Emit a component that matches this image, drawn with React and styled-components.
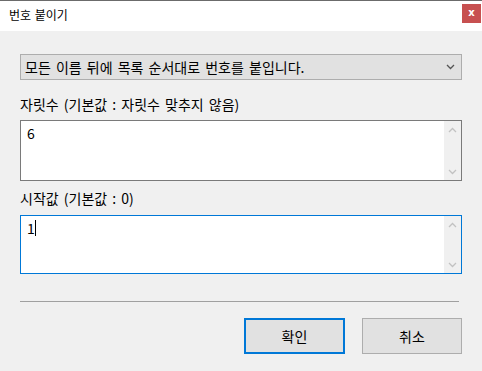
import React from "react";
import styled, { createGlobalStyle } from "styled-components";

const Global = createGlobalStyle`
  html, body { margin: 0; padding: 0; background: #f0f0f0; }
  body { font-family: "Noto Sans CJK KR", "Noto Sans", sans-serif; color: #000; }
  * { box-sizing: border-box; }
`;

const Window = styled.div`
  width: 482px;
  height: 371px;
  display: flex;
  flex-direction: column;
  background: #f0f0f0;
  overflow: hidden;
`;

const TitleBar = styled.div`
  height: 31px;
  background: #fff;
  border-top: 1px solid #6b6b6b;
  display: flex;
  align-items: center;
  justify-content: space-between;
  padding-left: 9px;
  padding-right: 1px;
`;

const Title = styled.span`
  font-size: 12px;
  line-height: 1;
  margin-top: -2px;
  word-spacing: 1px;
`;

const CloseBtn = styled.div`
  width: 19px;
  height: 19px;
  margin-top: -6px;
  background: #c75050;
  color: #fff;
  font-family: "DejaVu Sans", sans-serif;
  font-weight: bold;
  font-size: 10px;
  display: flex;
  align-items: center;
  justify-content: center;
  line-height: 1;
`;

const Body = styled.div`
  padding: 23px 20px 0 20px;
  display: flex;
  flex-direction: column;
  word-spacing: 2px;
`;

const Combo = styled.div`
  height: 26px;
  background: #e1e1e1;
  border: 1px solid #adadad;
  display: flex;
  align-items: center;
  justify-content: space-between;
  padding: 0 6px 0 4px;
  font-size: 14px;
`;

const Label = styled.div`
  font-size: 14px;
  line-height: 18px;
  margin-top: ${(p) => p.$top}px;
  height: 18px;
`;

const Field = styled.div`
  margin-top: ${(p) => p.$top}px;
  height: ${(p) => p.$h}px;
  background: #fff;
  border: 1px solid ${(p) => (p.$focus ? "#0078d7" : "#7a7a7a")};
  display: flex;
`;

const FieldText = styled.div`
  flex: 1;
  padding: 3px 0 0 6px;
  font-size: 14px;
  line-height: 18px;
  display: flex;
  align-items: flex-start;
`;

const Caret = styled.span`
  display: inline-block;
  width: 1px;
  height: 16px;
  margin-top: 1px;
  background: #000;
`;

const ScrollBar = styled.div`
  width: 17px;
  background: #f0f0f0;
  display: flex;
  flex-direction: column;
  justify-content: space-between;
  align-items: center;
  padding: 6px 0 5px;
`;

const Separator = styled.div`
  margin-top: 27px;
  height: 1px;
  background: #a0a0a0;
  margin-right: 3px;
`;

const Buttons = styled.div`
  margin-top: 16px;
  display: flex;
  justify-content: flex-end;
  gap: 17px;
`;

const Button = styled.div`
  width: ${(p) => p.$w}px;
  height: 36px;
  background: #e1e1e1;
  border: ${(p) => (p.$primary ? "2px solid #0078d7" : "1px solid #adadad")};
  display: flex;
  align-items: center;
  justify-content: center;
  font-size: 14px;
`;

const Chevron = ({ up, color = "#c2c2c2" }) => (
  <svg width="9" height="6" viewBox="0 0 9 6">
    <path
      d={up ? "M1 5 L4.5 1.5 L8 5" : "M1 1 L4.5 4.5 L8 1"}
      fill="none"
      stroke={color}
      strokeWidth="1.3"
    />
  </svg>
);

const TextBox = ({ top, h, focus, value }) => (
  <Field $top={top} $h={h} $focus={focus}>
    <FieldText>
      {value}
      {focus && <Caret />}
    </FieldText>
    <ScrollBar>
      <Chevron up />
      <Chevron />
    </ScrollBar>
  </Field>
);

export default function App() {
  return (
    <>
      <Global />
      <Window>
        <TitleBar>
          <Title>번호 붙이기</Title>
          <CloseBtn>x</CloseBtn>
        </TitleBar>
        <Body>
          <Combo>
            <span>모든 이름 뒤에 목록 순서대로 번호를 붙입니다.</span>
            <Chevron color="#555" />
          </Combo>
          <Label $top={15}>자릿수 (기본값 : 자릿수 맞추지 않음)</Label>
          <TextBox top={7} h={61} value="6" />
          <Label $top={8}>시작값 (기본값 : 0)</Label>
          <TextBox top={8} h={59} focus value="1" />
          <Separator />
          <Buttons>
            <Button $w={101} $primary>확인</Button>
            <Button $w={100}>취소</Button>
          </Buttons>
        </Body>
      </Window>
    </>
  );
}
